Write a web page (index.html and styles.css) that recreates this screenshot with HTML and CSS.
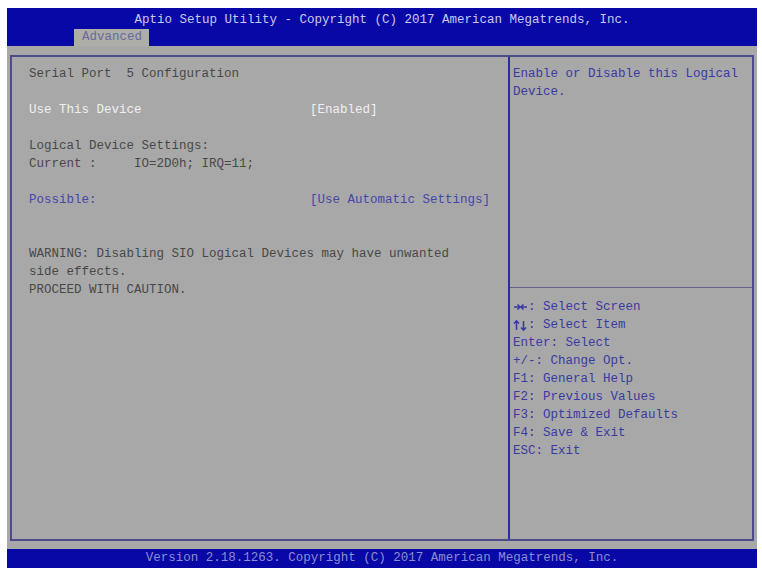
FILE: index.html
```html
<!DOCTYPE html>
<html lang="en">
<head>
    <meta charset="UTF-8">
    <title>Aptio Setup Utility</title>
    <link rel="stylesheet" href="styles.css">
</head>
<body>
    <div class="screen">
        <div class="header">
            <div class="title">Aptio Setup Utility - Copyright (C) 2017 American Megatrends, Inc.</div>
            <div class="tabs">
                <span class="tab">Advanced</span>
            </div>
        </div>

        <div class="main">
            <div class="box">
                <div class="left">
                    <div class="row">Serial Port  5 Configuration</div>
                    <div class="row"></div>
                    <div class="row selected">
                        <span class="label">Use This Device</span>
                        <span class="value">[Enabled]</span>
                    </div>
                    <div class="row"></div>
                    <div class="row">Logical Device Settings:</div>
                    <div class="row">Current :     IO=2D0h; IRQ=11;</div>
                    <div class="row"></div>
                    <div class="row option">
                        <span class="label">Possible:</span>
                        <span class="value">[Use Automatic Settings]</span>
                    </div>
                    <div class="row"></div>
                    <div class="row"></div>
                    <div class="row">WARNING: Disabling SIO Logical Devices may have unwanted</div>
                    <div class="row">side effects.</div>
                    <div class="row">PROCEED WITH CAUTION.</div>
                </div>

                <div class="right">
                    <div class="help">
                        <div class="row">Enable or Disable this Logical</div>
                        <div class="row">Device.</div>
                    </div>
                    <div class="keys">
                        <div class="row">
                            <svg class="arrow" width="15" height="18" viewBox="0 0 15 18">
                                <path d="M1 9h6M4.5 6.5L7 9l-2.5 2.5M14 9H8M10.5 6.5L8 9l2.5 2.5" fill="none" stroke="currentColor" stroke-width="1.6"/>
                            </svg>
                            <span>: Select Screen</span>
                        </div>
                        <div class="row">
                            <svg class="arrow" width="15" height="18" viewBox="0 0 15 18">
                                <path d="M3.5 14V5M1 7.5L3.5 5 6 7.5M10.5 5v9M8 11.5l2.5 2.5 2.5-2.5" fill="none" stroke="currentColor" stroke-width="1.6"/>
                            </svg>
                            <span>: Select Item</span>
                        </div>
                        <div class="row">Enter: Select</div>
                        <div class="row">+/-: Change Opt.</div>
                        <div class="row">F1: General Help</div>
                        <div class="row">F2: Previous Values</div>
                        <div class="row">F3: Optimized Defaults</div>
                        <div class="row">F4: Save &amp; Exit</div>
                        <div class="row">ESC: Exit</div>
                    </div>
                </div>
            </div>
        </div>

        <div class="footer">Version 2.18.1263. Copyright (C) 2017 American Megatrends, Inc.</div>
    </div>
</body>
</html>
```

FILE: styles.css
```css
body {
    margin: 0;
    background-color: #fff;
    font-family: "Liberation Mono", "DejaVu Sans Mono", monospace;
    font-size: 12.5px;
}

.screen {
    width: 750px;
    height: 560px;
    margin: 8px 0 0 7px;
    display: flex;
    flex-direction: column;
}

.header {
    height: 38px;
    box-sizing: border-box;
    padding-top: 4px;
    background-color: #0808a6;
    display: flex;
    flex-direction: column;
}

.title {
    height: 17px;
    line-height: 17px;
    text-align: center;
    color: #c8c8ee;
    white-space: pre;
}

.tabs {
    display: flex;
    padding-left: 67px;
}

.tab {
    width: 75px;
    height: 17px;
    line-height: 17px;
    box-sizing: border-box;
    padding-left: 8px;
    background-color: #aeaea8;
    color: #6a6a9c;
}

.main {
    height: 503px;
    box-sizing: border-box;
    padding: 9px 3px 8px 3px;
    background-color: #a8a8a8;
}

.box {
    height: 100%;
    box-sizing: border-box;
    border: 2px solid #4c4c88;
    display: flex;
}

.row {
    height: 18px;
    line-height: 18px;
    white-space: pre;
    display: flex;
}

.left {
    width: 498px;
    box-sizing: border-box;
    padding: 8px 0 0 17px;
    color: #484848;
    border-right: 2px solid #2a2aa4;
}

.label {
    width: 281px;
}

.selected {
    color: #f0f0f0;
}

.option {
    color: #4646a8;
}

.right {
    flex: 1;
    display: flex;
    flex-direction: column;
    color: #3a3aa2;
}

.help {
    height: 231px;
    box-sizing: border-box;
    padding: 8px 0 0 3px;
    border-bottom: 1px solid #62628a;
}

.keys {
    padding: 10px 0 0 3px;
}

.arrow {
    flex: none;
}

.footer {
    height: 19px;
    line-height: 19px;
    text-align: center;
    background-color: #0808a6;
    color: #8c8cd2;
    white-space: pre;
}
```
